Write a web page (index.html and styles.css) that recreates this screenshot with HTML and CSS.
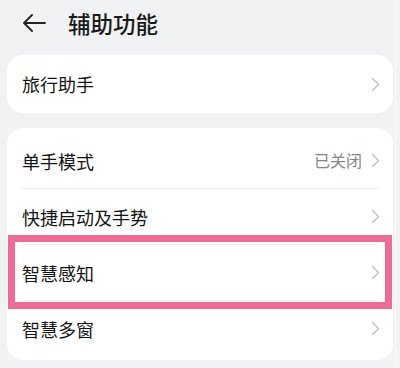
FILE: index.html
```html
<!DOCTYPE html>
<html lang="zh-CN">
<head>
<meta charset="utf-8">
<link rel="stylesheet" href="styles.css">
</head>
<body>
<div class="page">
  <header class="header">
    <svg class="back" width="24" height="18" viewBox="0 0 24 18"><path d="M23 9H2M10 1L2 9l8 8" fill="none" stroke="#222" stroke-width="1.8" stroke-linecap="round" stroke-linejoin="round"/></svg>
    <h1 class="title">辅助功能</h1>
  </header>
  <section class="card card-single">
    <div class="row row-first">
      <span class="label">旅行助手</span>
      <svg class="chev" width="9" height="15" viewBox="0 0 9 15"><path d="M1.5 1.5l6 6-6 6" fill="none" stroke="#bdbdbd" stroke-width="1.4" stroke-linecap="round" stroke-linejoin="round"/></svg>
    </div>
  </section>
  <section class="card card-list">
    <div class="row">
      <span class="label">单手模式</span>
      <span class="value">已关闭</span>
      <svg class="chev" width="9" height="15" viewBox="0 0 9 15"><path d="M1.5 1.5l6 6-6 6" fill="none" stroke="#bdbdbd" stroke-width="1.4" stroke-linecap="round" stroke-linejoin="round"/></svg>
    </div>
    <div class="row">
      <span class="label">快捷启动及手势</span>
      <svg class="chev" width="9" height="15" viewBox="0 0 9 15"><path d="M1.5 1.5l6 6-6 6" fill="none" stroke="#bdbdbd" stroke-width="1.4" stroke-linecap="round" stroke-linejoin="round"/></svg>
    </div>
    <div class="row row-highlight">
      <span class="label">智慧感知</span>
      <svg class="chev" width="9" height="15" viewBox="0 0 9 15"><path d="M1.5 1.5l6 6-6 6" fill="none" stroke="#bdbdbd" stroke-width="1.4" stroke-linecap="round" stroke-linejoin="round"/></svg>
    </div>
    <div class="row">
      <span class="label">智慧多窗</span>
      <svg class="chev" width="9" height="15" viewBox="0 0 9 15"><path d="M1.5 1.5l6 6-6 6" fill="none" stroke="#bdbdbd" stroke-width="1.4" stroke-linecap="round" stroke-linejoin="round"/></svg>
    </div>
  </section>
</div>
</body>
</html>
```

FILE: styles.css
```css
html, body {
  margin: 0;
  padding: 0;
  background: #f1f2f4;
}
body {
  font-family: "Noto Sans CJK SC", "Noto Sans", sans-serif;
  color: #1f1f1f;
  width: 400px;
  height: 368px;
  overflow: hidden;
}
.page {
  width: 396px;
  height: 368px;
  border-right: 1px solid #fafafb;
  padding: 0 0 0 7px;
  box-sizing: border-box;
}
.header {
  height: 55px;
  display: flex;
  align-items: center;
  padding-left: 15px;
  padding-bottom: 10px;
  box-sizing: border-box;
}
.back {
  display: block;
  margin-right: 22px;
}
.title {
  margin: 0;
  font-size: 22.5px;
  font-weight: 500;
  line-height: 30px;
  color: #1a1a1a;
}
.card {
  width: 386px;
  background: #fff;
  border-radius: 16px;
  box-sizing: border-box;
}
.card-single {
  height: 58px;
  display: flex;
  flex-direction: column;
  justify-content: center;
}
.card-list {
  margin-top: 15px;
  padding: 4px 0;
}
.row {
  position: relative;
  height: 56px;
  display: flex;
  align-items: center;
  padding: 0 13px 0 15px;
}
.row + .row::before {
  content: "";
  position: absolute;
  left: 15px;
  right: 15px;
  top: 0;
  height: 1px;
  background: #ececee;
}
.label {
  flex: 1;
  font-size: 18px;
  line-height: 24px;
  color: #141414;
  padding-top: 2px;
}
.row-first .label {
  padding-top: 0;
}
.value {
  font-size: 16px;
  line-height: 22px;
  color: #858585;
  margin-right: 9px;
}
.chev {
  display: block;
}
.row-highlight::after {
  content: "";
  position: absolute;
  left: 1px;
  right: 1px;
  top: -9px;
  bottom: -9px;
  border: 7px solid #f06b93;
  pointer-events: none;
}
```
